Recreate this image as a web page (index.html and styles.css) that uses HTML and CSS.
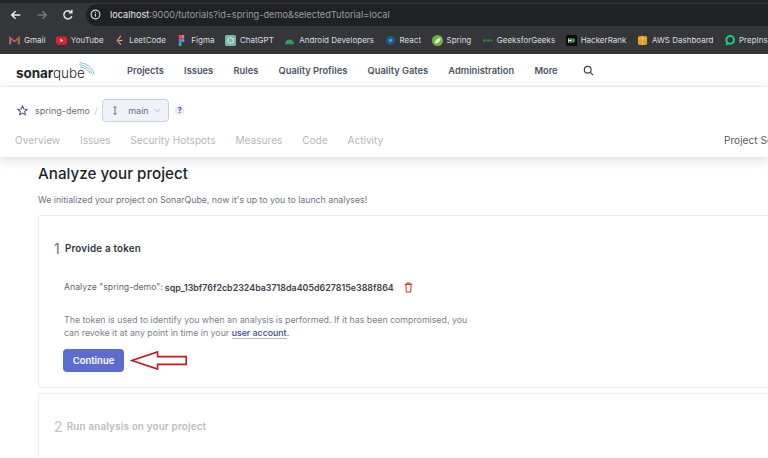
FILE: index.html
```html
<!DOCTYPE html>
<html lang="en">
<head>
<meta charset="utf-8">
<title>SonarQube</title>
<link rel="stylesheet" href="styles.css">
</head>
<body>
<header class="chrome">
  <div class="toolbar">
    <svg class="tool" viewBox="0 0 14 14"><path d="M12 7H2M6.500 2.500 2 7l4.500 4.500" fill="none" stroke="#eee" stroke-width="1.700"/></svg>
    <svg class="tool" viewBox="0 0 14 14"><path d="M2 7h10M7.500 2.500 12 7l-4.500 4.500" fill="none" stroke="#77787a" stroke-width="1.700"/></svg>
    <svg class="tool" viewBox="0 0 14 14"><path d="M11.500 8.500A4.800 4.800 0 1 1 10.500 3.500M11.500 1v3.500H8" fill="none" stroke="#eee" stroke-width="1.600"/></svg>
    <div class="url">
      <svg class="info" viewBox="0 0 12 12"><circle cx="6" cy="6" r="4.800" fill="none" stroke="#ddd" stroke-width="1.200"/><path d="M6 5.300v3.200M6 3.200v1.200" stroke="#ddd" stroke-width="1.200"/></svg>
      <span class="host">localhost</span><span class="path">:9000/tutorials?id=spring-demo&amp;selectedTutorial=local</span>
    </div>
  </div>
  <div class="bookmarks">
    <span class="bm"><svg viewBox="0 0 12 12"><path d="M1 10V3l5 4 5-4v7" fill="none" stroke="#e8503f" stroke-width="1.800"/><path d="M9.500 10V4.500L11 3v7z" fill="#3a8f55"/><path d="M1 10V3l1.500 1.200V10z" fill="#4a80e0"/></svg>Gmail</span>
    <span class="bm"><svg viewBox="0 0 12 12"><rect y="1.500" width="12" height="9" rx="2.200" fill="#e3202a"/><path d="M4.800 4v4L8 6z" fill="#fff"/></svg>YouTube</span>
    <span class="bm"><svg viewBox="0 0 12 12"><path d="M7.500 1 3.500 6l4 4.500" fill="none" stroke="#d9a24a" stroke-width="1.300"/><path d="M5 6h4" stroke="#bbb" stroke-width="1.200"/></svg>LeetCode</span>
    <span class="bm"><svg viewBox="0 0 12 12"><rect x="3" width="3" height="4" fill="#e8503f"/><rect x="6" width="3" height="4" fill="#f0786a"/><rect x="3" y="4" width="3" height="4" fill="#a55cf0"/><circle cx="7.500" cy="6" r="1.700" fill="#35b5ea"/><rect x="3" y="8" width="3" height="4" fill="#2cc07f"/></svg>Figma</span>
    <span class="bm"><svg viewBox="0 0 12 12"><rect width="12" height="12" rx="2" fill="#7fb5a5"/><circle cx="6" cy="6" r="3" fill="none" stroke="#d5e8e2" stroke-width="1.200"/></svg>ChatGPT</span>
    <span class="bm"><svg viewBox="0 0 12 12"><path d="M1 10a5 5 0 0 1 10 0z" fill="#3a9a5c"/></svg>Android Developers</span>
    <span class="bm"><svg viewBox="0 0 12 12"><circle cx="6" cy="6" r="5" fill="#1f5b7d"/><circle cx="6" cy="6" r="1.800" fill="#4aa3d6"/></svg>React</span>
    <span class="bm"><svg viewBox="0 0 12 12"><circle cx="6" cy="6" r="6" fill="#6fb33f"/><path d="M3 9c0-4 3-5 6.500-6C9 7 7 9.500 3 9z" fill="#e8f3dc"/></svg>Spring</span>
    <span class="bm"><svg viewBox="0 0 12 12"><path d="M1 6h10" stroke="#2f8d46" stroke-width="2" stroke-dasharray="3 1"/></svg>GeeksforGeeks</span>
    <span class="bm"><svg viewBox="0 0 12 12"><rect width="12" height="12" rx="2" fill="#0d0d0d"/><path d="M3 3.500v5M5.500 3.500v5M3 6h2.500" stroke="#fff" stroke-width="1.100"/><rect x="7" y="4" width="2.500" height="4" fill="#2ec866"/></svg>HackerRank</span>
    <span class="bm"><svg viewBox="0 0 12 12"><rect x="1" y="1" width="10" height="10" rx="2" fill="#e39a27"/><path d="M1 4h10M6 1v10" stroke="#f5c468" stroke-width=".8"/></svg>AWS Dashboard</span>
    <span class="bm"><svg viewBox="0 0 12 12"><path d="M2.500 11 4 8.500A4.200 4.200 0 1 1 6.800 9.500H4" fill="none" stroke="#1fce8a" stroke-width="2"/></svg>PrepInsta</span>
  </div>
</header>

<nav class="mainnav">
  <div class="logo">
    <span class="logo-word"><b>sonar</b>qube</span>
    <svg class="logo-waves" viewBox="0 0 26 20"><path d="M2 1.500C12 2 21 9 23.500 18.500M2 4.500C10 5 18 11 20.500 18.500M3 7.500C10 8.500 15 12.500 17.500 17" fill="none" stroke="#7fb4cf" stroke-width="1.300"/></svg>
  </div>
  <ul class="navlist">
    <li>Projects</li><li>Issues</li><li>Rules</li><li>Quality Profiles</li><li>Quality Gates</li><li>Administration</li><li>More</li>
  </ul>
  <svg class="search" viewBox="0 0 14 14"><circle cx="6" cy="6" r="4.300" fill="none" stroke="#3d4450" stroke-width="1.500"/><path d="m9.200 9.200 3.600 3.600" stroke="#3d4450" stroke-width="1.500"/></svg>
</nav>

<section class="projectbar">
  <div class="crumbs">
    <svg class="star" viewBox="0 0 12 12"><path d="m6 1 1.500 3.300 3.500.4-2.600 2.400.7 3.500L6 8.800 2.900 10.600l.7-3.500L1 4.700l3.500-.4z" fill="none" stroke="#4a5190" stroke-width="1.100"/></svg>
    <span class="proj">spring-demo</span>
    <span class="slash">/</span>
    <span class="branch">
      <svg class="branch-ico" viewBox="0 0 8 14"><path d="M4 2v10M2 3.500 4 1.500l2 2M2 10.500l2 2 2-2" fill="none" stroke="#566" stroke-width="1.200"/></svg>
      <span>main</span>
      <svg class="chev" viewBox="0 0 8 5"><path d="m1 1 3 3 3-3" fill="none" stroke="#a4a9b5"/></svg>
    </span>
    <span class="help">?</span>
  </div>
  <div class="tabs">
    <span>Overview</span><span>Issues</span><span>Security Hotspots</span><span>Measures</span><span>Code</span><span>Activity</span>
    <span class="tab-settings">Project Settings</span>
  </div>
</section>

<main class="content">
  <h1>Analyze your project</h1>
  <p class="lead">We initialized your project on SonarQube, now it's up to you to launch analyses!</p>

  <section class="card card-one">
    <h2><span class="num">1</span>Provide a token</h2>
    <div class="token-row">
      <span>Analyze "spring-demo":</span>
      <strong>sqp_13bf76f2cb2324ba3718da405d627815e388f864</strong>
      <svg class="trash" viewBox="0 0 10 12"><path d="M.8 2.500h8.400M3.500 2.500V1h3v1.500M2 2.500l.6 8.500h4.800L8 2.500" fill="none" stroke="#c4403f" stroke-width="1.200"/></svg>
    </div>
    <p class="note">The token is used to identify you when an analysis is performed. If it has been compromised, you can revoke it at any point in time in your <a href="#">user account</a>.</p>
    <div class="action">
      <button class="continue" type="button">Continue</button>
      <svg class="arrow" viewBox="0 0 60 22"><path d="M1 11 28 2v5h30v8H28v5z" fill="#fff" stroke="#c8171f" stroke-width="1.700"/></svg>
    </div>
  </section>

  <section class="card card-two">
    <h2><span class="num">2</span>Run analysis on your project</h2>
  </section>
</main>
</body>
</html>
```

FILE: styles.css
```css
* { box-sizing: border-box; }
html, body { margin: 0; height: 100%; }
body {
  width: 768px;
  height: 458px;
  overflow: hidden;
  background: #fff;
  font-family: Inter, "Liberation Sans", sans-serif;
  color: #2a2f3a;
}

.chrome { background: #35363a; height: 54px; border-top: 3px solid #232427; overflow: hidden; }
.toolbar { display: flex; align-items: center; height: 23px; padding-left: 10px; }
.tool { width: 12px; height: 12px; margin-right: 14px; flex: none; }
.url {
  display: flex;
  align-items: center;
  flex: 1;
  height: 22px;
  margin-left: -2px;
  padding-left: 4px;
  background: #202124;
  border-radius: 11px 0 0 11px;
  font-size: 9.200px;
  white-space: nowrap;
}
.info { width: 11px; height: 11px; margin-right: 9px; }
.host { color: #e8eaed; }
.path { color: #9a9da2; }

.bookmarks {
  display: flex;
  align-items: center;
  gap: 10.500px;
  height: 28px;
  padding-left: 9px;
  font-size: 8px;
  color: #dcdde0;
  white-space: nowrap;
}
.bm { display: flex; align-items: center; gap: 4px; flex: none; }
.bm svg { width: 11px; height: 11px; flex: none; }

.mainnav {
  display: flex;
  align-items: center;
  height: 33px;
  padding-left: 16px;
  border-bottom: 1px solid #f1f2f4;
}
.logo { display: flex; width: 111px; position: relative; height: 33px; align-items: center; flex: none; }
.logo-word { font-size: 13.500px; font-weight: 300; color: #22262e; letter-spacing: -.1px; margin-top: 5px; }
.logo-word b { font-weight: 700; }
.logo-waves { position: absolute; left: 62px; top: 6px; width: 18px; height: 17px; }
.navlist {
  display: flex;
  gap: 20.300px;
  list-style: none;
  margin: 0;
  padding: 0;
  font-size: 9.300px;
  font-weight: 600;
  color: #4e5562;
}
.search { width: 11px; height: 11px; margin-left: 25px; }

.projectbar {
  position: relative;
  height: 70px;
  box-shadow: 0 3px 10px rgba(30, 35, 50, .16);
  background: #fff;
}
.crumbs { display: flex; align-items: center; height: 46px; padding-left: 17px; font-size: 9px; color: #687080; }
.star { width: 11px; height: 11px; margin-right: 7px; }
.slash { margin: 0 4.500px; color: #c8cbd2; }
.branch {
  display: flex;
  align-items: center;
  width: 67px;
  height: 23px;
  margin-top: 1px;
  padding-left: 9px;
  background: #eff2f9;
  border: 1px solid #c9d0e3;
  border-radius: 4px;
}
.branch-ico { width: 6px; height: 11px; margin-right: 10px; }
.chev { width: 7px; height: 5px; margin-left: 5px; }
.help {
  display: flex;
  align-items: center;
  justify-content: center;
  width: 9px;
  height: 9px;
  margin-left: 6px;
  border-radius: 50%;
  background: #e7e9f5;
  color: #3d4590;
  font-size: 7px;
  font-weight: 700;
}
.tabs {
  display: flex;
  gap: 19.800px;
  padding-left: 15px;
  margin-top: 1px;
  font-size: 10.100px;
  color: #b4b8c1;
  white-space: nowrap;
}
.tabs .tab-settings { margin-left: 321px; color: #565d69; }

.content { padding: 7px 0 0 38px; }
h1 { margin: 0; font-size: 15.200px; line-height: 20px; font-weight: 500; color: #20232b; }
.lead { margin: 9px 0 0; font-size: 8.780px; line-height: 14px; color: #6c7380; }

.card {
  width: 730px;
  background: #fff;
  border: 1px solid #eceef1;
  border-right: 0;
  border-radius: 3px 0 0 3px;
  padding-left: 15px;
}
.card-one { height: 173px; margin-top: 8px; padding-top: 25px; }
.card-two { height: 65px; margin-top: 5px; padding-top: 25px; border-bottom: 0; }
h2 { display: flex; align-items: center; margin: 0; font-size: 9.800px; line-height: 16px; font-weight: 600; letter-spacing: .2px; color: #30343d; }
.num { font-size: 14px; font-weight: 400; color: #6b7482; margin-right: 5px; }
.card-two h2 { color: #b9bcc4; }
.card-two .num { color: #c3c6cc; margin-right: 4px; }

.token-row { display: flex; align-items: center; margin: 23px 0 0 10px; height: 14px; font-size: 8.700px; color: #5f6672; }
.token-row strong { margin-left: 2px; font-size: 8.900px; font-weight: 600; color: #3a3f4b; }
.trash { width: 9px; height: 11px; margin-left: 10px; }
.note { width: 410px; margin: 20px 0 0 10px; font-size: 8.800px; line-height: 12.500px; color: #7b818c; }
.note a { color: #3d4590; text-decoration: none; border-bottom: 1px solid #b5b9cc; font-weight: 500; }
.action { display: flex; align-items: center; margin: 10px 0 0 9px; }
.continue {
  width: 61px;
  height: 23px;
  padding: 0;
  border: 0;
  border-radius: 4px;
  background: #5d6cd0;
  color: #fff;
  font: 600 9.500px Inter, "Liberation Sans", sans-serif;
}
.arrow { width: 59px; height: 21px; margin-left: 6px; }
```
